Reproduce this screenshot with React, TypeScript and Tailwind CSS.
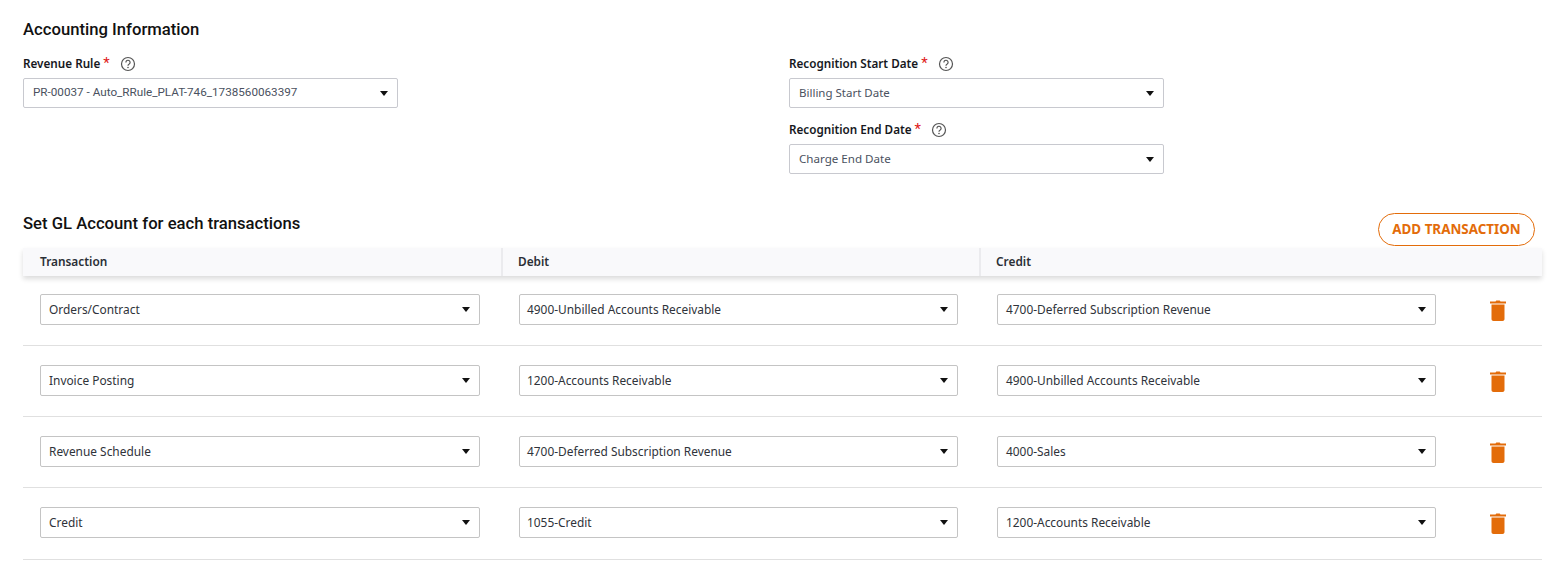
import React from "react";

const noto = "font-['Noto_Sans','Liberation_Sans',sans-serif]";
const roboto = "font-['Roboto','Liberation_Sans',sans-serif]";

function Help() {
  return (
    <svg width="16" height="16" viewBox="0 0 16 16" fill="none" className="shrink-0">
      <circle cx="8" cy="8" r="6.5" stroke="#555" strokeWidth="1.2" />
      <path d="M5.9 6.4a2.1 2.1 0 1 1 3.3 1.7c-.8.5-1.2.9-1.2 1.7" stroke="#555" strokeWidth="1.2" />
      <circle cx="8" cy="11.5" r=".8" fill="#555" />
    </svg>
  );
}

function Caret() {
  return <span className="w-0 h-0 border-x-[4.5px] border-x-transparent border-t-[5px] border-t-[#111]" />;
}

function Field({ label, value, gap, font = noto, size }: { label: string; value: string; gap: string; font?: string; size: string }) {
  return (
    <div className="w-[375px]">
      <div className="flex items-center h-[16px] mb-[7px]">
        <span className={`${noto} font-semibold text-[11.7px] text-[#16181d] leading-[16px]`}>{label}</span>
        <span className="text-[#e02020] text-[15px] leading-[16px] ml-[3px] font-['Roboto']">*</span>
        <span className={`${gap} mt-[2px]`}><Help /></span>
      </div>
      <div className="flex items-center justify-between h-[30px] bg-white border border-[#c8c9cf] rounded-[2px] pl-[9px] pr-[9px]">
        <span className={`${font} ${size} text-[#4a5160]`}>{value}</span>
        <Caret />
      </div>
    </div>
  );
}

function Select({ value, width, pad }: { value: string; width: string; pad: string }) {
  return (
    <div className={`flex items-center justify-between h-[31px] ${width} ${pad} bg-white border border-[#c4c4c4] rounded-[2px] pr-[9px]`}>
      <span className={`${noto} text-[11.9px] text-[#2f333a]`}>{value}</span>
      <Caret />
    </div>
  );
}

function Trash() {
  return (
    <svg width="16" height="21" viewBox="0 0 16 21" fill="#e36c0a">
      <path d="M5.5 1.5 6.3.5h3.4l.8 1H16v2H0v-2z" />
      <path d="M1.5 4.5h13v14.5c0 1.1-.8 2-2 2h-9c-1.2 0-2-.9-2-2z" />
    </svg>
  );
}

const rows = [
  ["Orders/Contract", "4900-Unbilled Accounts Receivable", "4700-Deferred Subscription Revenue"],
  ["Invoice Posting", "1200-Accounts Receivable", "4900-Unbilled Accounts Receivable"],
  ["Revenue Schedule", "4700-Deferred Subscription Revenue", "4000-Sales"],
  ["Credit", "1055-Credit", "1200-Accounts Receivable"],
];

export default function App() {
  return (
    <div className="w-[1550px] h-[586px] bg-white overflow-hidden pl-[23px] pt-[20px]">
      <h2 className={`${roboto} font-medium text-[16.66px] leading-[20px] text-[#111]`}>Accounting Information</h2>

      <div className="flex mt-[15px]">
        <div className="w-[766px]">
          <Field label="Revenue Rule" value="PR-00037 - Auto_RRule_PLAT-746_1738560063397" gap="ml-[10px]" font={roboto} size="text-[11.7px]" />
        </div>
        <div className="flex flex-col gap-[13px]">
          <Field label="Recognition Start Date" value="Billing Start Date" gap="ml-[10px]" size="text-[11.5px]" />
          <Field label="Recognition End Date" value="Charge End Date" gap="ml-[10px]" size="text-[11.6px]" />
        </div>
      </div>

      <div className="w-[1519px] mt-[33px]">
        <div className="flex items-start justify-between h-[41px] pr-[7px]">
          <h2 className={`${roboto} font-medium text-[16.66px] leading-[20px] text-[#111] mt-[7px]`}>Set GL Account for each transactions</h2>
          <button className={`${noto} mt-[6px] h-[33px] w-[157px] rounded-full border border-[#e36c0a] text-[#e36c0a] font-bold text-[13.4px] bg-white`}>ADD TRANSACTION</button>
        </div>
        <div className={`${noto} flex h-[28px] bg-[#f9f9fb] shadow-[0_3px_5px_rgba(0,0,0,0.14)] font-semibold text-[11.85px] text-[#2b2f36]`}>
          <div className="w-[480px] pl-[17px] flex items-center border-r-2 border-[#ebebee]">Transaction</div>
          <div className="w-[478px] pl-[15px] flex items-center border-r-2 border-[#ebebee]">Debit</div>
          <div className="flex-1 pl-[15px] flex items-center">Credit</div>
        </div>
        <div className="-mt-[1px]">
          {rows.map((r, i) => (
            <div key={r[0]} className={`flex items-start pt-[19px] ${i === 3 ? "pb-[21px]" : "pb-[20px]"} border-b border-[#e0e0e0] pl-[17px]`}>
              <Select value={r[0]} width="w-[440px]" pad="pl-[8px]" />
              <div className="ml-[39px]"><Select value={r[1]} width="w-[439px]" pad="pl-[7px]" /></div>
              <div className="ml-[39px]"><Select value={r[2]} width="w-[439px]" pad="pl-[8px]" /></div>
              <div className="ml-[54px] mt-[6px] flex"><Trash /></div>
            </div>
          ))}
        </div>
      </div>
    </div>
  );
}
